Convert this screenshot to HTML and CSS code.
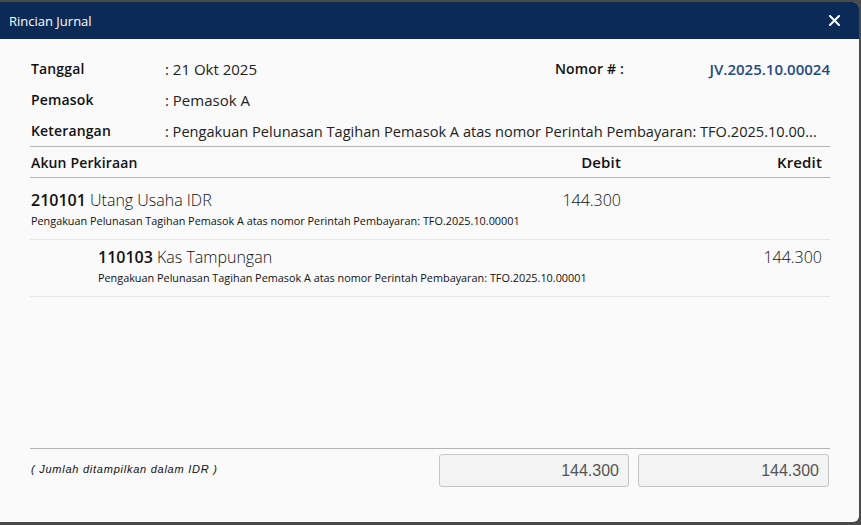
FILE: index.html
```html
<!DOCTYPE html>
<html lang="id">
<head>
    <meta charset="UTF-8">
    <title>Rincian Jurnal</title>
    <link rel="stylesheet" href="styles.css">
</head>
<body>
    <div class="dialog">
        <div class="dialog-header">
            <span class="dialog-title">Rincian Jurnal</span>
            <span class="dialog-close">
                <svg width="11" height="11" viewBox="0 0 11 11">
                    <path d="M1 1 L10 10 M10 1 L1 10" stroke="#ffffff" stroke-width="2" stroke-linecap="square"/>
                </svg>
            </span>
        </div>

        <div class="dialog-body">
            <div class="info">
                <div class="info-row">
                    <span class="info-label">Tanggal</span>
                    <span class="info-value">: 21 Okt 2025</span>
                    <span class="info-label nomor-label">Nomor # :</span>
                    <span class="nomor-value">JV.2025.10.00024</span>
                </div>
                <div class="info-row">
                    <span class="info-label">Pemasok</span>
                    <span class="info-value">: Pemasok A</span>
                </div>
                <div class="info-row">
                    <span class="info-label">Keterangan</span>
                    <span class="info-value wide" title="Pengakuan Pelunasan Tagihan Pemasok A atas nomor Perintah Pembayaran: TFO.2025.10.00001">: Pengakuan Pelunasan Tagihan Pemasok A atas nomor Perintah Pembayaran: TFO.2025.10.00...</span>
                </div>
            </div>

            <div class="journal-head">
                <div class="col-akun">Akun Perkiraan</div>
                <div class="col-num">Debit</div>
                <div class="col-num">Kredit</div>
            </div>

            <div class="journal-rows">
                <div class="journal-row">
                    <div class="col-akun">
                        <div class="akun-name"><b>210101</b> Utang Usaha IDR</div>
                        <div class="akun-desc">Pengakuan Pelunasan Tagihan Pemasok A atas nomor Perintah Pembayaran: TFO.2025.10.00001</div>
                    </div>
                    <div class="col-num amount">144.300</div>
                    <div class="col-num amount"></div>
                </div>
                <div class="journal-row">
                    <div class="col-akun indent">
                        <div class="akun-name"><b>110103</b> Kas Tampungan</div>
                        <div class="akun-desc">Pengakuan Pelunasan Tagihan Pemasok A atas nomor Perintah Pembayaran: TFO.2025.10.00001</div>
                    </div>
                    <div class="col-num amount"></div>
                    <div class="col-num amount">144.300</div>
                </div>
            </div>

            <div class="journal-foot">
                <div class="foot-note">( Jumlah ditampilkan dalam IDR )</div>
                <div class="total-cell"><div class="total-box">144.300</div></div>
                <div class="total-cell kredit"><div class="total-box">144.300</div></div>
            </div>
        </div>
    </div>
</body>
</html>
```

FILE: styles.css
```css
* {
    margin: 0;
    padding: 0;
    box-sizing: border-box;
}

body {
    background: #4a4a4a;
    font-family: 'Open Sans', 'Noto Sans', sans-serif;
    color: #1a1a1a;
    padding-top: 2px;
    height: 525px;
    overflow: hidden;
}

.dialog {
    width: 859px;
    height: 520px;
    background: #fafafa;
    border-radius: 0 6px 6px 0;
    display: flex;
    flex-direction: column;
    overflow: hidden;
}

.dialog-header {
    height: 37px;
    background: #0c2a56;
    color: #ffffff;
    display: flex;
    align-items: center;
    justify-content: space-between;
    padding: 0 19px 0 9px;
    flex-shrink: 0;
}

.dialog-title {
    font-size: 13px;
}

.dialog-close {
    display: flex;
}

.dialog-body {
    flex: 1;
    display: flex;
    flex-direction: column;
    padding: 0 29px 0 30px;
}

.info {
    padding-top: 14px;
}

.info-row {
    display: flex;
    height: 31px;
    align-items: center;
    font-size: 14px;
}

.info-label {
    font-weight: 600;
    width: 135px;
    padding-left: 1px;
    color: #111;
    letter-spacing: 0.15px;
}

.info-value {
    color: #222;
    flex: 1;
    font-size: 15px;
}

.info-value.wide {
    white-space: nowrap;
    font-size: 14.6px;
}

.nomor-label {
    width: 152px;
}

.nomor-value {
    width: 124px;
    text-align: right;
    color: #1f4a86;
    font-weight: 600;
    font-size: 15px;
}

.journal-head,
.journal-row,
.journal-foot {
    display: grid;
    grid-template-columns: 1fr 200px 201px;
}

.journal-head {
    border-top: 1px solid #b4b4b4;
    border-bottom: 1px solid #b4b4b4;
    height: 32px;
    align-items: center;
    font-size: 14px;
    font-weight: 600;
    color: #111;
    letter-spacing: 0.15px;
}

.journal-head .col-num {
    font-size: 15px;
}

.col-akun {
    padding-left: 1px;
    min-width: 0;
}

.col-num {
    text-align: right;
    padding-right: 8px;
}

.journal-rows {
    flex: 1;
    padding-top: 5px;
}

.journal-row {
    border-bottom: 1px solid #e6e6e6;
    padding: 5px 0 9px;
}

.col-akun.indent {
    padding-left: 68px;
}

.akun-name {
    font-size: 16px;
    line-height: 24px;
    font-weight: 300;
    color: #111;
    white-space: nowrap;
}

.akun-name b {
    font-weight: 600;
}

.akun-desc {
    font-size: 10.85px;
    line-height: 18px;
    color: #111;
    white-space: nowrap;
}

.amount {
    font-size: 16px;
    line-height: 24px;
    font-weight: 300;
    color: #111;
}

.journal-foot {
    border-top: 1px solid #b4b4b4;
    padding-top: 5px;
    height: 74px;
}

.foot-note {
    font-family: 'Liberation Sans', Arial, sans-serif;
    font-size: 11px;
    letter-spacing: 0.75px;
    font-style: italic;
    padding-left: 1px;
    line-height: 30px;
    color: #111;
}

.total-cell {
    padding-left: 10px;
}

.total-cell.kredit {
    padding-left: 9px;
    padding-right: 1px;
}

.total-box {
    height: 33px;
    border: 1px solid #c6c6c6;
    border-radius: 3px;
    background: #f3f3f3;
    font-family: 'Liberation Sans', Arial, sans-serif;
    font-size: 16px;
    color: #555555;
    text-align: right;
    line-height: 31px;
    padding-right: 9px;
}
```
